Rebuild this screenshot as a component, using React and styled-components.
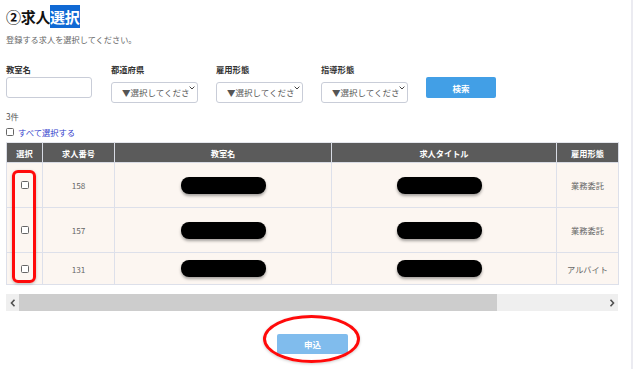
import React from "react";
import styled, { createGlobalStyle } from "styled-components";

const Global = createGlobalStyle`
  html, body { margin: 0; padding: 0; background: #fff; }
  body { font-family: "Noto Sans CJK JP", "Noto Sans", sans-serif; }
  * { box-sizing: border-box; }
`;

const Page = styled.div`
  width: 633px;
  height: 369px;
  border-right: 2px solid #ebebf1;
  padding: 0 13px 0 6px;
  overflow: hidden;
`;

const Title = styled.h2`
  margin: 5px 0 0;
  font-size: 15px;
  line-height: 23px;
  font-weight: 700;
  color: #111;
  letter-spacing: -0.3px;
`;

const Selected = styled.span`
  background: #1069d4;
  color: #fff;
  display: inline-block;
`;

const Lead = styled.p`
  margin: 5px 0 0;
  font-size: 8.2px;
  line-height: 12px;
  color: #666;
`;

const Filters = styled.div`
  display: flex;
  align-items: flex-end;
  margin-top: 18px;
`;

const Field = styled.div`
  width: ${(p) => p.$w}px;
  margin-right: ${(p) => p.$mr}px;
  display: flex;
  flex-direction: column;
`;

const Label = styled.label`
  font-size: 8.3px;
  line-height: 12px;
  font-weight: 700;
  color: #333;
  margin-bottom: 2px;
`;

const TextInput = styled.input`
  width: 86px;
  height: 21px;
  border: 1px solid #c9cdd8;
  border-radius: 3px;
  margin: 0;
  padding: 0 4px;
`;

const SelectWrap = styled.div`
  position: relative;
  width: 87px;
  height: 21px;
`;

const Select = styled.select`
  appearance: none;
  width: 100%;
  height: 21px;
  border: 1px solid #c9cdd8;
  border-radius: 3px;
  background: #fff;
  padding: 0 7px 0 10px;
  font-family: inherit;
  font-size: 8.5px;
  color: #555;
  margin: 0;
  overflow: hidden;
  white-space: nowrap;
  text-overflow: clip;
`;

const Chevron = styled.svg`
  position: absolute;
  right: 3px;
  top: 9px;
  pointer-events: none;
  background: #fff;
`;

const SearchButton = styled.button`
  width: 70px;
  height: 21px;
  border: none;
  border-radius: 2px;
  background: #429fe6;
  color: #fff;
  font-family: inherit;
  font-size: 8.5px;
  font-weight: 700;
  margin: 0;
  padding: 0;
`;

const Count = styled.div`
  margin-top: 12px;
  font-size: 8.3px;
  line-height: 12px;
  color: #555;
`;

const SelectAll = styled.label`
  display: flex;
  align-items: center;
  gap: 4px;
  margin-top: 4px;
  font-size: 8.3px;
  line-height: 12px;
  color: #3340cc;
`;

const Box = styled.span`
  width: 8px;
  height: 8px;
  border: 1px solid #666;
  border-radius: 1.5px;
  background: #fff;
  display: inline-block;
`;

const TableArea = styled.div`
  position: relative;
  margin-top: 4px;
  width: 612px;
`;

const Table = styled.table`
  border-collapse: collapse;
  width: 612px;
  table-layout: fixed;
`;

const Th = styled.th`
  background: #5b5b5b;
  color: #fff;
  font-size: 8.2px;
  font-weight: 700;
  height: 20px;
  padding: 0;
  border: 1px solid #d8dbe4;
  border-top-color: #e4e6ec;
`;

const Tr = styled.tr`
  height: ${(p) => p.$h}px;
  background: #fcf6f1;
`;

const Td = styled.td`
  border: 1px solid #dde0ea;
  text-align: center;
  vertical-align: middle;
  font-size: 8.2px;
  color: #666;
  padding: 0;
`;

const Pill = styled.span`
  display: inline-block;
  width: 85px;
  height: 17px;
  border-radius: 8px;
  background: #000;
  box-shadow: 0 2px 3px rgba(0, 0, 0, 0.35);
  vertical-align: middle;
  margin-right: ${(p) => p.$shift || 0}px;
`;

const RedFrame = styled.div`
  position: absolute;
  left: 6px;
  top: 28px;
  width: 24px;
  height: 113px;
  border: 3px solid #ff0a0a;
  border-radius: 6px;
  box-shadow: 0 1px 3px rgba(0, 0, 0, 0.25);
  pointer-events: none;
`;

const ScrollBar = styled.div`
  margin-top: 9px;
  width: 612px;
  height: 17px;
  background: #efefef;
  display: flex;
  align-items: center;
`;

const Arrow = styled.div`
  width: 13px;
  height: 17px;
  display: flex;
  align-items: center;
  justify-content: center;
`;

const Track = styled.div`
  flex: 1;
  height: 17px;
  display: flex;
`;

const Thumb = styled.div`
  width: 478px;
  height: 17px;
  background: #cdcdcd;
`;

const Footer = styled.div`
  display: flex;
  justify-content: center;
  margin-top: 18px;
  width: 612px;
`;

const ApplyWrap = styled.div`
  position: relative;
  width: 71px;
  height: 20px;
  margin-left: 1px;
`;

const ApplyButton = styled.button`
  width: 71px;
  height: 20px;
  border: none;
  border-radius: 2px;
  background: #80bced;
  color: #fff;
  font-family: inherit;
  font-size: 8.5px;
  font-weight: 700;
  padding: 0;
  margin: 0;
`;

const RedEllipse = styled.div`
  position: absolute;
  left: -14px;
  top: -14px;
  width: 97px;
  height: 48px;
  border: 3.5px solid #ff0a0a;
  border-radius: 50%;
  box-shadow: 0 1px 3px rgba(0, 0, 0, 0.2);
  pointer-events: none;
`;

const ChevronDown = () => (
  <Chevron width="6" height="4" viewBox="0 0 6 4">
    <path d="M0.6 0.6 L3 3 L5.4 0.6" fill="none" stroke="#444" strokeWidth="1" />
  </Chevron>
);

const FakeSelect = () => (
  <SelectWrap>
    <Select defaultValue="">
      <option value="">▼選択してください</option>
    </Select>
    <ChevronDown />
  </SelectWrap>
);

const rows = [
  { id: 158, type: "業務委託", h: 45 },
  { id: 157, type: "業務委託", h: 45 },
  { id: 131, type: "アルバイト", h: 32 },
];

export default function App() {
  return (
    <>
      <Global />
      <Page>
        <Title>
          ②求人<Selected>選択</Selected>
        </Title>
        <Lead>登録する求人を選択してください。</Lead>
        <Filters>
          <Field $w={86} $mr={19}>
            <Label>教室名</Label>
            <TextInput />
          </Field>
          <Field $w={87} $mr={18}>
            <Label>都道府県</Label>
            <FakeSelect />
          </Field>
          <Field $w={87} $mr={18}>
            <Label>雇用形態</Label>
            <FakeSelect />
          </Field>
          <Field $w={87} $mr={18}>
            <Label>指導形態</Label>
            <FakeSelect />
          </Field>
          <SearchButton>検索</SearchButton>
        </Filters>
        <Count>3件</Count>
        <SelectAll>
          <Box />
          すべて選択する
        </SelectAll>
        <TableArea>
          <Table>
            <colgroup>
              <col style={{ width: 36 }} />
              <col style={{ width: 72 }} />
              <col style={{ width: 217 }} />
              <col style={{ width: 225 }} />
              <col style={{ width: 62 }} />
            </colgroup>
            <thead>
              <tr>
                <Th>選択</Th>
                <Th>求人番号</Th>
                <Th>教室名</Th>
                <Th>求人タイトル</Th>
                <Th>雇用形態</Th>
              </tr>
            </thead>
            <tbody>
              {rows.map((r) => (
                <Tr key={r.id} $h={r.h}>
                  <Td>
                    <Box />
                  </Td>
                  <Td>{r.id}</Td>
                  <Td>
                    <Pill />
                  </Td>
                  <Td>
                    <Pill $shift={10} />
                  </Td>
                  <Td>{r.type}</Td>
                </Tr>
              ))}
            </tbody>
          </Table>
          <RedFrame />
        </TableArea>
        <ScrollBar>
          <Arrow>
            <svg width="6" height="8" viewBox="0 0 6 8">
              <path d="M4.5 0.8 L1.5 4 L4.5 7.2" fill="none" stroke="#505050" strokeWidth="1.6" />
            </svg>
          </Arrow>
          <Track>
            <Thumb />
          </Track>
          <Arrow>
            <svg width="6" height="8" viewBox="0 0 6 8">
              <path d="M1.5 0.8 L4.5 4 L1.5 7.2" fill="none" stroke="#505050" strokeWidth="1.6" />
            </svg>
          </Arrow>
        </ScrollBar>
        <Footer>
          <ApplyWrap>
            <ApplyButton>申込</ApplyButton>
            <RedEllipse />
          </ApplyWrap>
        </Footer>
      </Page>
    </>
  );
}
